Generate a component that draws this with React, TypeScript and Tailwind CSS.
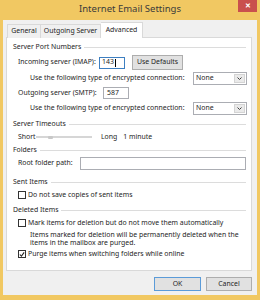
import React from "react";

const font = { fontFamily: '"Noto Sans", "Open Sans", sans-serif' };

function Header({ label, mt }: { label: string; mt: string }) {
  return (
    <div className={`flex h-[12px] items-center ${mt}`}>
      <span className="whitespace-nowrap">{label}</span>
      <div className="ml-[3px] h-px flex-1 bg-[#dcdcdc]" />
    </div>
  );
}

function Select() {
  return (
    <div className="flex h-[13px] w-[54px] shrink-0 items-center border border-[#abadb3] bg-white">
      <span className="flex-1 pl-[2px] leading-none">None</span>
      <div className="mr-[1px] flex h-[9px] w-[11px] items-center justify-center border border-[#d4d4d4] bg-[#eaeaea]">
        <svg width="5" height="3" viewBox="0 0 5 3">
          <path d="M0.5 0.5 L2.5 2.5 L4.5 0.5" stroke="#404040" strokeWidth="1" fill="none" />
        </svg>
      </div>
    </div>
  );
}

function Check({ checked }: { checked?: boolean }) {
  return (
    <div className="flex h-[8px] w-[8px] shrink-0 items-center justify-center border border-[#333333] bg-white">
      {checked && (
        <svg width="7" height="7" viewBox="0 0 7 7">
          <path d="M1 3.5 L2.8 5.5 L6 1" stroke="#222" strokeWidth="1.3" fill="none" />
        </svg>
      )}
    </div>
  );
}

export default function App() {
  return (
    <div
      className="flex h-[300px] w-[260px] flex-col whitespace-nowrap bg-[#f1c862] text-[6.9px] text-[#1e1e1e]"
      style={font}
    >
      {/* title bar */}
      <div className="flex h-[20px] shrink-0">
        <div className="w-[22px]" />
        <div className="flex flex-1 items-center justify-center pb-[1px] text-[9.5px] text-[#3a3a3a]">
          Internet Email Settings
        </div>
        <div className="flex w-[22px] justify-start">
          <div className="flex h-[12px] w-[19px] items-center justify-center bg-[#c9504d] text-[7px] font-bold text-white">
            ✕
          </div>
        </div>
      </div>

      {/* body */}
      <div className="mx-[3px] flex flex-1 flex-col bg-[#f0f0f0] pl-[3px] pr-[5px]">
        {/* tabs */}
        <div className="relative z-10 -mb-px mt-[2px] flex h-[16px] items-end pl-[1px]">
          <div className="flex h-[14px] w-[34px] items-center justify-center border border-b-0 border-[#d9d9d9] bg-[#f0f0f0]">
            General
          </div>
          <div className="flex h-[14px] w-[60px] items-center justify-center border border-b-0 border-l-0 border-[#d9d9d9] bg-[#f0f0f0]">
            Outgoing Server
          </div>
          <div className="flex h-[16px] w-[42px] items-center justify-center border border-b-0 border-l-0 border-[#d9d9d9] bg-white pb-[1px]">
            Advanced
          </div>
        </div>

        {/* panel */}
        <div className="flex h-[234px] flex-col border border-[#d9d9d9] bg-white pl-[6px] pr-[5px] pt-[3px]">
          <Header label="Server Port Numbers" mt="" />
          <div className="mt-[2px] flex h-[15px] items-center pl-[5px]">
            <span className="w-[81px] shrink-0">Incoming server (IMAP):</span>
            <div className="flex h-[12px] w-[26px] shrink-0 items-center border border-[#3d7fc1] bg-white pl-[2px]">
              143<span className="ml-px h-[8px] w-px bg-black" />
            </div>
            <div className="ml-[7px] flex h-[15px] w-[51px] shrink-0 items-center justify-center border border-[#adadad] bg-[#e1e1e1]">
              Use Defaults
            </div>
          </div>
          <div className="mt-[2px] flex h-[13px] items-center pl-[17px]">
            <span className="w-[163px] shrink-0">Use the following type of encrypted connection:</span>
            <Select />
          </div>
          <div className="mt-[2px] flex h-[12px] items-center pl-[5px]">
            <span className="w-[85px] shrink-0">Outgoing server (SMTP):</span>
            <div className="flex h-[12px] w-[26px] shrink-0 items-center border border-[#abadb3] bg-white pl-[3px]">587</div>
          </div>
          <div className="mt-[3px] flex h-[13px] items-center pl-[17px]">
            <span className="w-[163px] shrink-0">Use the following type of encrypted connection:</span>
            <Select />
          </div>

          <Header label="Server Timeouts" mt="mt-[3px]" />
          <div className="mt-px flex h-[12px] items-center pl-[5px]">
            <span className="w-[18px] shrink-0">Short</span>
            <div className="relative flex h-[8px] w-[56px] shrink-0 items-center">
              <div className="h-[2px] w-full border border-[#d6d6d6] bg-[#e7e7e7]" />
              <div className="absolute left-[12px] top-[3px] h-[3px] w-[5px] rounded-[1px] bg-[#c8c8c8]" />
            </div>
            <span className="ml-[9px]">Long</span>
            <span className="ml-[6px]">1 minute</span>
          </div>

          <Header label="Folders" mt="mt-px" />
          <div className="mt-px flex h-[13px] items-center pl-[5px]">
            <span className="w-[62px] shrink-0">Root folder path:</span>
            <div className="h-[13px] flex-1 border border-[#abadb3] bg-white" />
          </div>

          <Header label="Sent Items" mt="mt-[6px]" />
          <div className="mt-px flex h-[12px] items-center gap-[2px] pl-[5px]">
            <Check />
            <span>Do not save copies of sent items</span>
          </div>

          <Header label="Deleted Items" mt="mt-[3px]" />
          <div className="mt-px flex h-[12px] items-center gap-[2px] pl-[5px]">
            <Check />
            <span>Mark items for deletion but do not move them automatically</span>
          </div>
          <div className="mt-[2px] pl-[17px] leading-[7.5px]">
            <div>Items marked for deletion will be permanently deleted when the</div>
            <div>items in the mailbox are purged.</div>
          </div>
          <div className="mt-[2px] flex h-[12px] items-center gap-[2px] pl-[5px]">
            <Check checked />
            <span>Purge items when switching folders while online</span>
          </div>
        </div>

        {/* buttons */}
        <div className="mt-[6px] flex justify-end gap-[5px]">
          <div className="flex h-[14px] w-[47px] items-center justify-center border border-[#5b9bd8] bg-[#e1e1e1]">
            OK
          </div>
          <div className="flex h-[14px] w-[46px] items-center justify-center border border-[#adadad] bg-[#e1e1e1]">
            Cancel
          </div>
        </div>
      </div>
      <div className="h-[5px] shrink-0" />
    </div>
  );
}
